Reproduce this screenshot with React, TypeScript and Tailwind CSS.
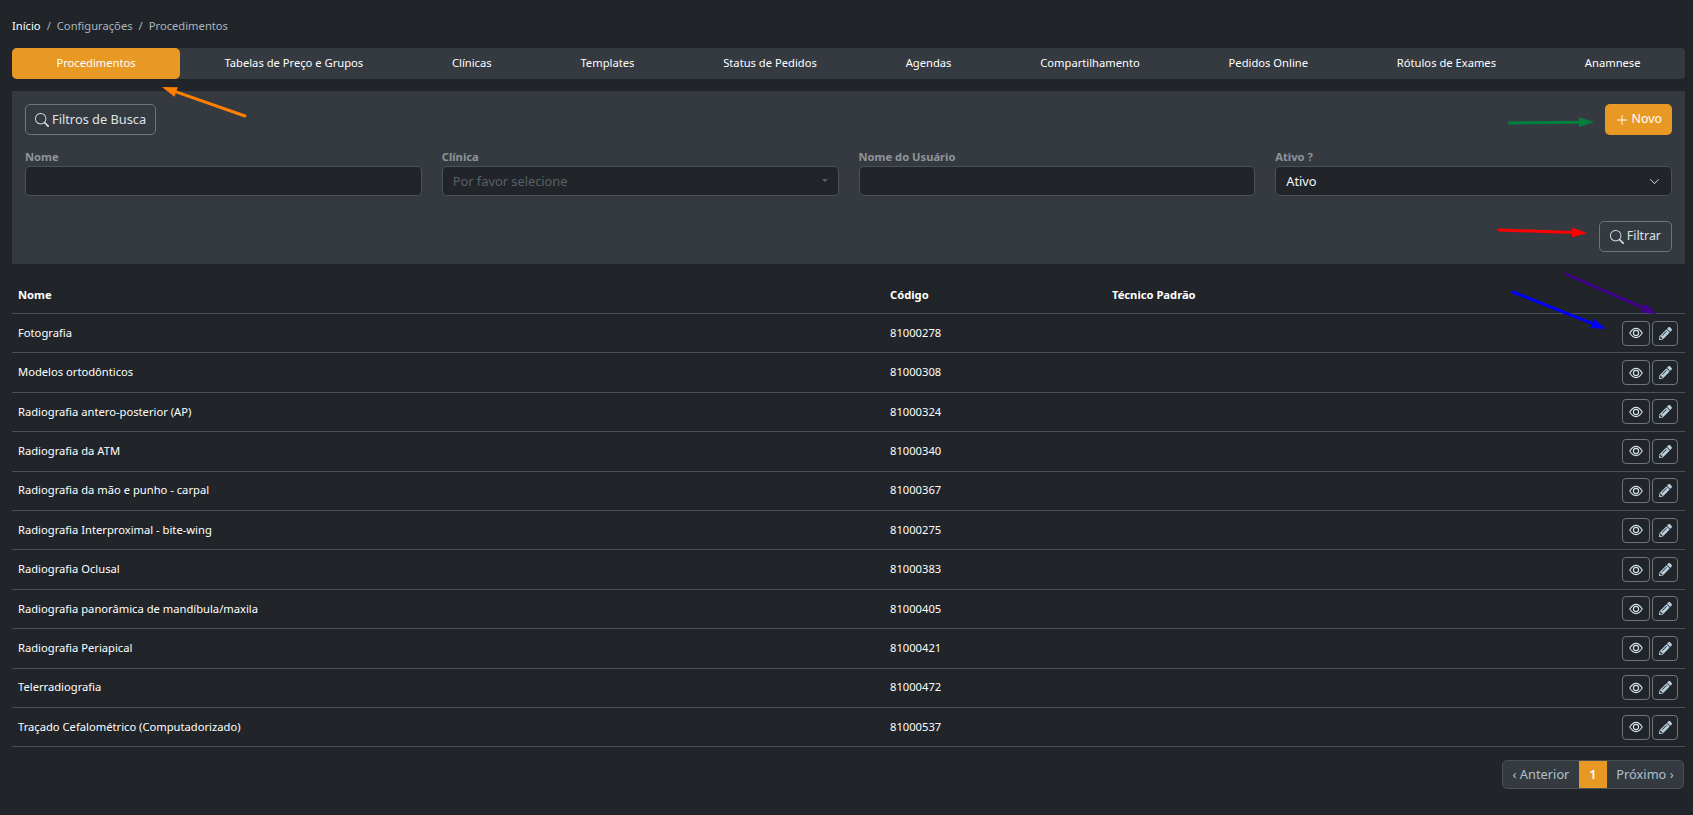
import React from 'react'
import { BsPlusLg, BsSearch, BsChevronDown } from 'react-icons/bs'
import { FaPencilAlt } from 'react-icons/fa'

const tabs = [
  'Procedimentos',
  'Tabelas de Preço e Grupos',
  'Clínicas',
  'Templates',
  'Status de Pedidos',
  'Agendas',
  'Compartilhamento',
  'Pedidos Online',
  'Rótulos de Exames',
  'Anamnese',
]

const rows = [
  ['Fotografia', '81000278'],
  ['Modelos ortodônticos', '81000308'],
  ['Radiografia antero-posterior (AP)', '81000324'],
  ['Radiografia da ATM', '81000340'],
  ['Radiografia da mão e punho - carpal', '81000367'],
  ['Radiografia Interproximal - bite-wing', '81000275'],
  ['Radiografia Oclusal', '81000383'],
  ['Radiografia panorâmica de mandíbula/maxila', '81000405'],
  ['Radiografia Periapical', '81000421'],
  ['Telerradiografia', '81000472'],
  ['Traçado Cefalométrico (Computadorizado)', '81000537'],
]

const arrows = [
  { x1: 245, y1: 116, x2: 162, y2: 87, color: '#ff8000' },
  { x1: 1509, y1: 123, x2: 1594, y2: 122, color: '#00803c' },
  { x1: 1499, y1: 230, x2: 1587, y2: 233, color: '#ff0000' },
  { x1: 1566, y1: 274, x2: 1657, y2: 314, color: '#40008c' },
  { x1: 1513, y1: 292, x2: 1606, y2: 329, color: '#0000ff' },
]

function Arrow({ x1, y1, x2, y2, color }: { x1: number; y1: number; x2: number; y2: number; color: string }) {
  const a = Math.atan2(y2 - y1, x2 - x1)
  const len = 15
  const wing = 5
  const bx = x2 - len * Math.cos(a)
  const by = y2 - len * Math.sin(a)
  const px = wing * Math.sin(a)
  const py = wing * Math.cos(a)
  return (
    <g>
      <line x1={x1} y1={y1} x2={bx} y2={by} stroke={color} strokeWidth={3} strokeLinecap="round" />
      <polygon points={`${x2},${y2} ${bx + px},${by - py} ${bx - px},${by + py}`} fill={color} />
    </g>
  )
}

function EyeIcon() {
  return (
    <svg width="14" height="12" viewBox="0 0 14 12" fill="none" stroke="currentColor">
      <path d="M0.8 6C2.4 3.4 4.5 1.4 7 1.4S11.6 3.4 13.2 6C11.6 8.6 9.5 10.6 7 10.6S2.4 8.6 0.8 6Z" strokeWidth="1.1" />
      <circle cx="7" cy="6" r="2.6" strokeWidth="1.1" />
    </svg>
  )
}

function Field({ label, children }: { label: string; children: React.ReactNode }) {
  return (
    <div className="flex flex-col flex-1 min-w-0">
      <label className="h-[20px] pt-[1px] text-[11.2px] leading-[20px] font-bold text-[#8f9499]">{label}</label>
      <div className="relative flex items-center bg-[#212529] border border-[#495057] rounded-[5px] h-[30px] px-[10px] pt-[1px] text-[12.8px]">
        {children}
      </div>
    </div>
  )
}

export default function App() {
  return (
    <div className="relative bg-[#212529] w-full min-h-[815px] text-white font-['Noto_Sans',sans-serif] overflow-hidden">
      <div className="pl-[12px] pr-[8px] pt-[16px]">
        <div className="flex items-center gap-[6px] h-[20px] text-[11.2px] text-[#a9b4bd]">
          <span className="text-white">Início</span>
          <span>/</span>
          <span>Configurações</span>
          <span>/</span>
          <span>Procedimentos</span>
        </div>

        <div className="flex bg-[#353a41] rounded-[4px] h-[31px] mt-[12px] text-[11.2px]">
          {tabs.map((t, i) => (
            <div
              key={t}
              className={
                i === 0
                  ? 'flex items-center justify-center flex-auto rounded-[5px] bg-[#e89923] text-white'
                  : 'flex items-center justify-center flex-auto text-white'
              }
            >
              {t}
            </div>
          ))}
        </div>

        <div className="bg-[#353a41] h-[173px] mt-[12px] pt-[13px] pl-[13px] pr-[13px]">
          <div className="flex justify-between h-[31px]">
            <button className="flex items-center gap-[3px] h-[31px] px-[9px] border border-[#6c757d] rounded-[5px] text-[12.8px] text-[#dee2e6]">
              <BsSearch size={14} className="text-[#cfe0ea]" />
              Filtros de Busca
            </button>
            <button className="flex items-center gap-[3px] h-[31px] px-[10px] rounded-[5px] bg-[#e89923] text-[12.4px] text-white">
              <BsPlusLg size={14} />
              Novo
            </button>
          </div>
          <div className="flex gap-[20px] mt-[11px]">
            <Field label="Nome">
              <span />
            </Field>
            <Field label="Clínica">
              <span className="text-[#5b6066]">Por favor selecione</span>
              <span className="absolute right-[10px] top-[12px] w-0 h-0 border-x-[3px] border-x-transparent border-t-[3px] border-t-[#5b6066]" />
            </Field>
            <Field label="Nome do Usuário">
              <span />
            </Field>
            <Field label="Ativo ?">
              <span className="text-[#f4f6f7]">Ativo</span>
              <BsChevronDown size={11} className="absolute right-[11px] top-[9px] text-[#dee2e6]" />
            </Field>
          </div>
          <div className="flex justify-end mt-[25px]">
            <button className="flex items-center gap-[3px] h-[31px] px-[10px] border border-[#6c757d] rounded-[5px] text-[12.4px] text-[#dee2e6]">
              <BsSearch size={14} className="text-[#cfe0ea]" />
              Filtrar
            </button>
          </div>
        </div>

        <div className="grid grid-cols-[872px_222px_1fr] items-center h-[37px] mt-[13px] pl-[6px] border-b border-[#495057] text-[11.2px] font-bold">
          <span>Nome</span>
          <span>Código</span>
          <span>Técnico Padrão</span>
        </div>
        {rows.map(([nome, codigo]) => (
          <div
            key={codigo}
            className="grid grid-cols-[872px_222px_1fr] items-center h-[39.4px] pl-[6px] pr-[7px] border-b border-[#495057] text-[11.2px]"
          >
            <span>{nome}</span>
            <span>{codigo}</span>
            <div className="flex justify-end gap-[2px]">
              <button className="flex items-center justify-center w-[28px] h-[25px] border border-[#6c757d] rounded-[4px] text-[#d5e4ee]">
                <EyeIcon />
              </button>
              <button className="flex items-center justify-center w-[26px] h-[25px] border border-[#6c757d] rounded-[4px] text-[#b8cfe0]">
                <FaPencilAlt size={13} />
              </button>
            </div>
          </div>
        ))}

        <div className="flex justify-end mt-[13px] pr-[1px]">
          <div className="flex h-[29px] bg-[#353a41] border border-[#495057] rounded-[5px] overflow-hidden text-[12.8px] text-[#adc0cc]">
            <span className="flex items-center w-[76px] justify-center">‹ Anterior</span>
            <span className="flex items-center w-[28px] justify-center bg-[#e89923] text-white font-semibold">1</span>
            <span className="flex items-center w-[76px] justify-center">Próximo ›</span>
          </div>
        </div>
      </div>

      <svg className="absolute inset-0 pointer-events-none" width="1693" height="815">
        {arrows.map(a => (
          <Arrow key={a.color} {...a} />
        ))}
      </svg>
    </div>
  )
}
